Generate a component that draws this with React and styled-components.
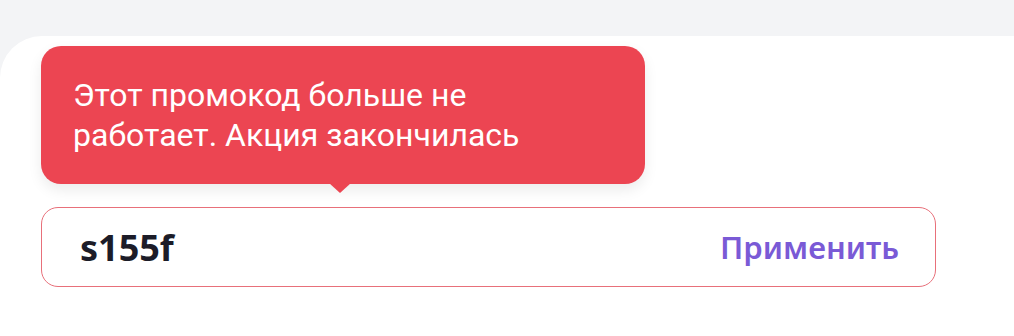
import styled, { createGlobalStyle } from "styled-components";

const GlobalStyle = createGlobalStyle`
  html, body {
    margin: 0;
    padding: 0;
    background: #f3f4f6;
    font-family: Roboto, "Noto Sans", sans-serif;
  }
`;

const Page = styled.div`
  width: 1014px;
  height: 336px;
  overflow: hidden;
  padding-top: 36px;
  box-sizing: border-box;
`;

const Card = styled.section`
  background: #ffffff;
  border-top-left-radius: 42px;
  height: 300px;
  padding: 10px 0 0 41px;
  box-sizing: border-box;
  display: flex;
  flex-direction: column;
  gap: 23px;
`;

const Tooltip = styled.div`
  position: relative;
  width: 604px;
  height: 138px;
  box-sizing: border-box;
  padding: 29px 32px;
  background: #ec4552;
  border-radius: 20px;
  box-shadow: 0 6px 14px rgba(0, 0, 0, 0.08);
  color: #ffffff;
  font-size: 32px;
  line-height: 40px;

  &::after {
    content: "";
    position: absolute;
    left: 288px;
    bottom: -9px;
    width: 0;
    height: 0;
    border-left: 11px solid transparent;
    border-right: 11px solid transparent;
    border-top: 10px solid #ec4552;
  }
`;

const Field = styled.div`
  width: 895px;
  height: 80px;
  box-sizing: border-box;
  border: 1.5px solid #e8707a;
  border-radius: 17px;
  display: flex;
  align-items: center;
  justify-content: space-between;
  padding: 0 36px 0 38px;
`;

const Code = styled.span`
  font-family: "Noto Sans", sans-serif;
  font-weight: 700;
  font-size: 36px;
  color: #1c1c28;
`;

const Apply = styled.button`
  border: none;
  background: none;
  padding: 0;
  font-family: "Noto Sans", sans-serif;
  font-weight: 600;
  font-size: 31px;
  color: #7a5ad6;
  cursor: pointer;
`;

export default function App() {
  return (
    <>
      <GlobalStyle />
      <Page>
        <Card>
          <Tooltip>
            Этот промокод больше не
            <br />
            работает. Акция закончилась
          </Tooltip>
          <Field>
            <Code>s155f</Code>
            <Apply>Применить</Apply>
          </Field>
        </Card>
      </Page>
    </>
  );
}
